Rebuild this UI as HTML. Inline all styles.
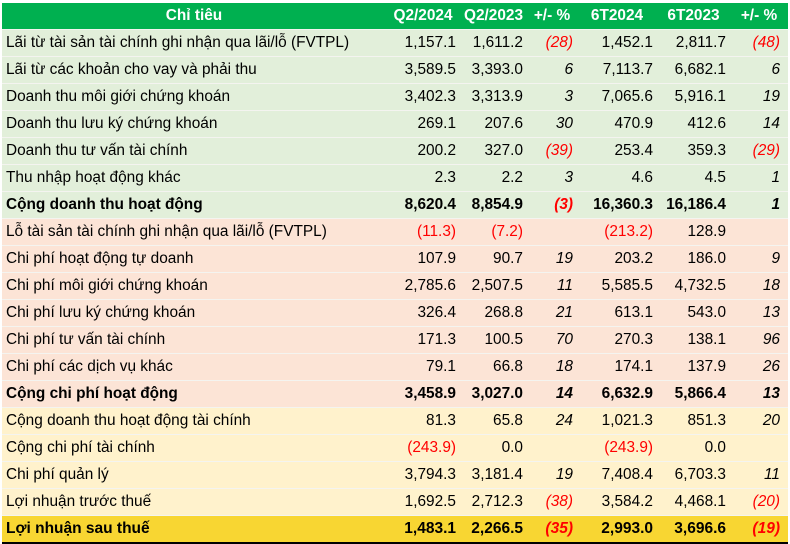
<!DOCTYPE html><html><head><meta charset="utf-8"><style>
body{margin:0;width:790px;height:544px;background:#fff;overflow:hidden;font-family:"Liberation Sans",Arial,sans-serif;font-size:15.4px;color:#000}
table{position:absolute;left:2px;top:3px;border-collapse:collapse;width:786px;table-layout:fixed}
td{height:26px;padding:0 4px 0 2px;border-bottom:1px solid #f4f4f0;white-space:nowrap;text-align:right;line-height:26px}
td:first-child{text-align:left;padding-left:4px}
tr.h td{background:#00b050;color:#fff;font-weight:bold;text-align:center;padding:0;}
tr.g td{background:#e2efda}tr.p td{background:#fce4d6}tr.c td{background:#fff2cc}
tr.y td{background:#f8d632;font-weight:bold;font-size:15.5px;border-bottom:2px solid #000}
tr.b td{font-weight:bold}
.r{color:#f00}.i{font-style:italic}
td.l{padding-right:8px}
</style></head><body><table>
<colgroup><col style="width:384px"><col style="width:74px"><col style="width:67px"><col style="width:50px"><col style="width:80px"><col style="width:73px"><col style="width:58px"></colgroup>
<tr class="h"><td style="text-align:center">Chỉ tiêu</td><td>Q2/2024</td><td>Q2/2023</td><td>+/- %</td><td>6T2024</td><td>6T2023</td><td>+/- %</td></tr>
<tr class="g"><td>Lãi từ tài sản tài chính ghi nhận qua lãi/lỗ (FVTPL)</td><td>1,157.1</td><td>1,611.2</td><td class="i r">(28)</td><td>1,452.1</td><td>2,811.7</td><td class="i r l">(48)</td></tr>
<tr class="g"><td>Lãi từ các khoản cho vay và phải thu</td><td>3,589.5</td><td>3,393.0</td><td class="i">6</td><td>7,113.7</td><td>6,682.1</td><td class="i l">6</td></tr>
<tr class="g"><td>Doanh thu môi giới chứng khoán</td><td>3,402.3</td><td>3,313.9</td><td class="i">3</td><td>7,065.6</td><td>5,916.1</td><td class="i l">19</td></tr>
<tr class="g"><td>Doanh thu lưu ký chứng khoán</td><td>269.1</td><td>207.6</td><td class="i">30</td><td>470.9</td><td>412.6</td><td class="i l">14</td></tr>
<tr class="g"><td>Doanh thu tư vấn tài chính</td><td>200.2</td><td>327.0</td><td class="i r">(39)</td><td>253.4</td><td>359.3</td><td class="i r l">(29)</td></tr>
<tr class="g"><td>Thu nhập hoạt động khác</td><td>2.3</td><td>2.2</td><td class="i">3</td><td>4.6</td><td>4.5</td><td class="i l">1</td></tr>
<tr class="g b"><td>Cộng doanh thu hoạt động</td><td>8,620.4</td><td>8,854.9</td><td class="i r">(3)</td><td>16,360.3</td><td>16,186.4</td><td class="i l">1</td></tr>
<tr class="p"><td>Lỗ tài sản tài chính ghi nhận qua lãi/lỗ (FVTPL)</td><td class="r">(11.3)</td><td class="r">(7.2)</td><td></td><td class="r">(213.2)</td><td>128.9</td><td></td></tr>
<tr class="p"><td>Chi phí hoạt động tự doanh</td><td>107.9</td><td>90.7</td><td class="i">19</td><td>203.2</td><td>186.0</td><td class="i l">9</td></tr>
<tr class="p"><td>Chi phí môi giới chứng khoán</td><td>2,785.6</td><td>2,507.5</td><td class="i">11</td><td>5,585.5</td><td>4,732.5</td><td class="i l">18</td></tr>
<tr class="p"><td>Chi phí lưu ký chứng khoán</td><td>326.4</td><td>268.8</td><td class="i">21</td><td>613.1</td><td>543.0</td><td class="i l">13</td></tr>
<tr class="p"><td>Chi phí tư vấn tài chính</td><td>171.3</td><td>100.5</td><td class="i">70</td><td>270.3</td><td>138.1</td><td class="i l">96</td></tr>
<tr class="p"><td>Chi phí các dịch vụ khác</td><td>79.1</td><td>66.8</td><td class="i">18</td><td>174.1</td><td>137.9</td><td class="i l">26</td></tr>
<tr class="p b"><td>Cộng chi phí hoạt động</td><td>3,458.9</td><td>3,027.0</td><td class="i">14</td><td>6,632.9</td><td>5,866.4</td><td class="i l">13</td></tr>
<tr class="c"><td>Cộng doanh thu hoạt động tài chính</td><td>81.3</td><td>65.8</td><td class="i">24</td><td>1,021.3</td><td>851.3</td><td class="i l">20</td></tr>
<tr class="c"><td>Cộng chi phí tài chính</td><td class="r">(243.9)</td><td>0.0</td><td></td><td class="r">(243.9)</td><td>0.0</td><td></td></tr>
<tr class="c"><td>Chi phí quản lý</td><td>3,794.3</td><td>3,181.4</td><td class="i">19</td><td>7,408.4</td><td>6,703.3</td><td class="i l">11</td></tr>
<tr class="c"><td>Lợi nhuận trước thuế</td><td>1,692.5</td><td>2,712.3</td><td class="i r">(38)</td><td>3,584.2</td><td>4,468.1</td><td class="i r l">(20)</td></tr>
<tr class="y"><td>Lợi nhuận sau thuế</td><td>1,483.1</td><td>2,266.5</td><td class="i r">(35)</td><td>2,993.0</td><td>3,696.6</td><td class="i r l">(19)</td></tr>
</table></body></html>
